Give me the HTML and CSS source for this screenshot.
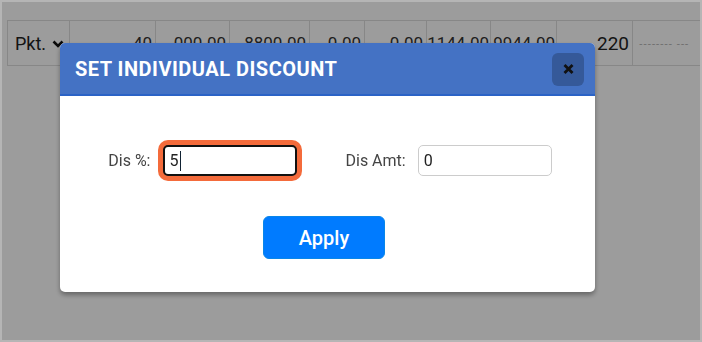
FILE: index.html
```html
<!DOCTYPE html>
<html lang="en">
<head>
    <meta charset="UTF-8">
    <meta name="viewport" content="width=device-width, initial-scale=1.0">
    <title>Set Individual Discount</title>
    <link rel="stylesheet" href="styles.css">
</head>
<body>
    <div class="page">
        <div class="topbar"></div>
        <table class="grid">
            <colgroup>
                <col style="width: 62px">
                <col style="width: 86px">
                <col style="width: 74px">
                <col style="width: 80px">
                <col style="width: 55px">
                <col style="width: 62px">
                <col style="width: 64px">
                <col style="width: 66px">
                <col style="width: 76px">
                <col style="width: 90px">
            </colgroup>
            <tr>
                <td class="unit">Pkt.
                    <svg class="chev" width="12" height="8" viewBox="0 0 12 8"><path d="M1.5 1.5 L6 6 L10.5 1.5" fill="none" stroke="#111" stroke-width="2.6"/></svg>
                </td>
                <td class="num">40</td>
                <td class="num">000.00</td>
                <td class="num">8800.00</td>
                <td class="num">0.00</td>
                <td class="num">0.00</td>
                <td class="num tight">1144.00</td>
                <td class="num tight">9944.00</td>
                <td class="num big">220</td>
                <td class="dash">-------- ---</td>
            </tr>
        </table>
    </div>

    <div class="overlay"></div>

    <div class="modal">
        <div class="modal-head">
            <h2>SET INDIVIDUAL DISCOUNT</h2>
            <button class="close" type="button">
                <svg width="11" height="10" viewBox="0 0 11 10"><path d="M1.5 1 L9.5 9 M9.5 1 L1.5 9" stroke="#111" stroke-width="2.8"/></svg>
            </button>
        </div>
        <div class="modal-body">
            <div class="fields">
                <div class="field">
                    <label for="disPct">Dis %:</label>
                    <div class="focus-wrap">
                        <input type="text" id="disPct" class="focused" value="5">
                        <span class="caret"></span>
                    </div>
                </div>
                <div class="field">
                    <label for="disAmt">Dis Amt:</label>
                    <input type="text" id="disAmt" value="0">
                </div>
            </div>
            <button class="apply" type="button">Apply</button>
        </div>
    </div>
</body>
</html>
```

FILE: styles.css
```css
body {
    margin: 0;
    background-color: #b5b5b5;
    font-family: Roboto, "Liberation Sans", sans-serif;
    overflow: hidden;
}
.page {
    margin: 2px;
    height: 338px;
    background-color: white;
    overflow: hidden;
}
.topbar {
    height: 18px;
}
.grid {
    margin-left: 5px;
    border-collapse: collapse;
    table-layout: fixed;
    width: 715px;
}
.grid td {
    height: 44px;
    border: 1px solid #ddd;
    padding: 0 3px;
    color: #333;
    font-size: 17px;
    white-space: nowrap;
    overflow: visible;
}
.grid .unit {
    padding-left: 7px;
    font-size: 18px;
    color: #222;
}
.chev {
    vertical-align: 2px;
    margin-left: 1px;
}
.grid .num {
    text-align: right;
}
.grid .tight {
    padding: 0 1px 0 0;
}
.grid .big {
    font-size: 19px;
    color: #222;
}
.grid .dash {
    padding-left: 6px;
    font-family: "DejaVu Sans", sans-serif;
    font-size: 10px;
    letter-spacing: 0.6px;
    color: #b5b5b5;
}
.overlay {
    position: fixed;
    top: 2px;
    left: 2px;
    right: 2px;
    bottom: 2px;
    background-color: rgba(0,0,0,0.39);
}
.modal {
    position: fixed;
    left: 60px;
    top: 43px;
    width: 535px;
    height: 249px;
    background-color: white;
    border-radius: 5px;
    box-shadow: 0 3px 5px rgba(0,0,0,0.35);
    overflow: hidden;
    display: flex;
    flex-direction: column;
}
.modal-head {
    height: 51px;
    background-color: #4472c4;
    border-bottom: 2px solid #2b63c6;
    display: flex;
    align-items: center;
    justify-content: space-between;
    padding: 0 11px 0 15px;
}
.modal-head h2 {
    margin: 0;
    color: white;
    font-size: 20px;
    font-weight: bold;
    letter-spacing: 0.5px;
}
.close {
    width: 32px;
    height: 33px;
    border: none;
    border-radius: 6px;
    background-color: rgba(0,0,0,0.22);
    display: flex;
    align-items: center;
    justify-content: center;
    padding: 0;
    margin-top: 1px;
}
.modal-body {
    display: flex;
    flex-direction: column;
    align-items: center;
    padding: 49px 7px 0 0;
}
.fields {
    display: flex;
    align-items: center;
    gap: 49px;
    padding-left: 12px;
}
.field {
    display: flex;
    align-items: center;
    gap: 12px;
}
label {
    font-size: 16px;
    color: #444;
}
input[type="text"] {
    width: 134px;
    height: 31px;
    box-sizing: border-box;
    border: 1px solid #ccc;
    border-radius: 5px;
    padding: 0 5px;
    font-family: Roboto, "Liberation Sans", sans-serif;
    font-size: 16px;
    color: #222;
    outline: none;
}
.focus-wrap {
    position: relative;
}
input.focused {
    display: block;
    border: 2px solid #111;
    box-shadow: 0 0 0 5px #f46b3b;
    border-radius: 5px;
}
.caret {
    position: absolute;
    left: 17px;
    top: 6px;
    width: 1px;
    height: 20px;
    background-color: #123;
}
.apply {
    margin-top: 40px;
    width: 122px;
    height: 43px;
    background-color: #007bff;
    border: 1px solid #0a86e8;
    border-radius: 6px;
    color: white;
    font-family: Roboto, "Liberation Sans", sans-serif;
    font-size: 20px;
    font-weight: 500;
    cursor: pointer;
}
```
